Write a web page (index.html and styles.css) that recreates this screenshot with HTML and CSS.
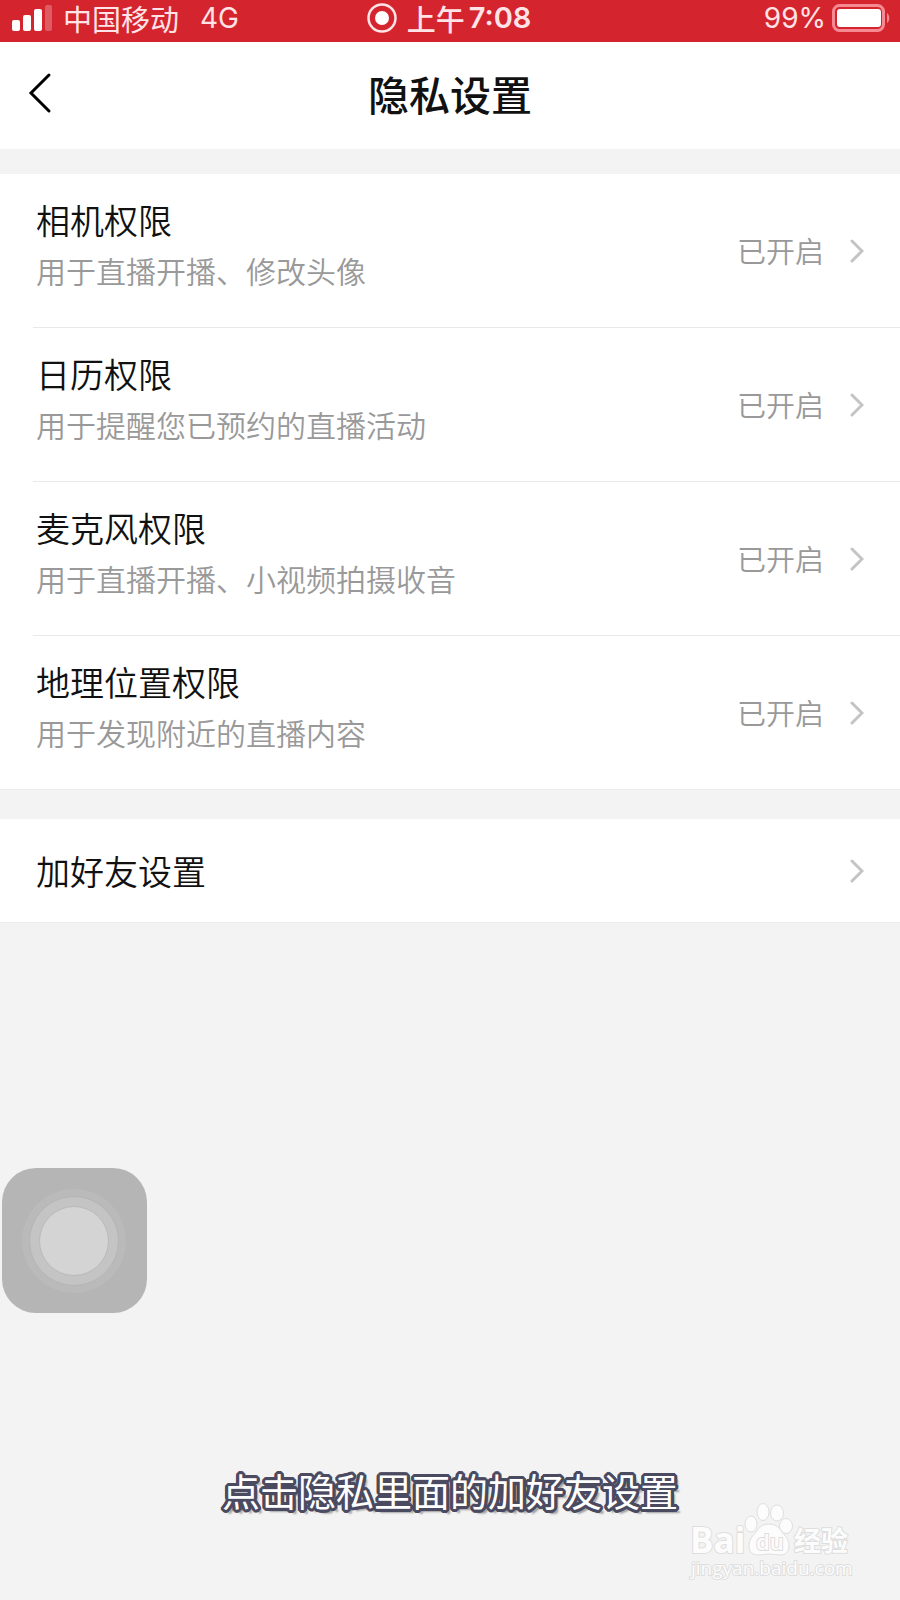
FILE: index.html
```html
<!DOCTYPE html>
<html lang="zh-CN">

<head>
  <meta charset="UTF-8">
  <meta name="viewport" content="width=device-width, initial-scale=1.0">
  <title>隐私设置</title>
  <link rel="stylesheet" href="styles.css">
</head>

<body>
  <svg class="defs" width="0" height="0" aria-hidden="true">
    <symbol id="chevron" viewBox="0 0 14 24">
      <path d="M2 2l10 10L2 22" />
    </symbol>
  </svg>

  <div class="status-bar">
    <div class="status-left">
      <svg class="signal" width="40" height="26" viewBox="0 0 40 26">
        <rect x="0" y="15" width="8" height="11" rx="2" />
        <rect x="11" y="10" width="8" height="16" rx="2" />
        <rect x="22" y="4" width="8" height="22" rx="2" />
        <rect x="33" y="0" width="7" height="26" rx="2" opacity="0.25" />
      </svg>
      <span>中国移动</span>
      <span class="network">4G</span>
    </div>
    <div class="status-time">
      <svg width="30" height="30" viewBox="0 0 30 30">
        <circle cx="15" cy="15" r="13.5" fill="none" stroke="#ffe3e6" stroke-width="2.5" />
        <circle cx="15" cy="15" r="7" fill="#fff" />
      </svg>
      <span>上午</span>
      <span class="clock">7:08</span>
    </div>
    <div class="status-right">
      <span class="percent">99%</span>
      <svg width="58" height="28" viewBox="0 0 58 28">
        <rect x="1.5" y="1.5" width="50" height="25" rx="6" fill="none" stroke="#f58a93" stroke-width="3" />
        <rect x="5" y="5" width="44" height="18" rx="3" fill="#fff" />
        <path d="M55 9c3 2 3 8 0 10z" fill="#f58a93" />
      </svg>
    </div>
  </div>

  <header class="nav-bar">
    <button class="back" type="button" aria-label="返回">
      <svg width="24" height="42" viewBox="0 0 24 42">
        <path d="M21 3L3 21l18 18" />
      </svg>
    </button>
    <h1>隐私设置</h1>
  </header>

  <main>
    <ul class="group">
      <li>
        <a class="row" href="#camera">
          <span class="text">
            <span class="name">相机权限</span>
            <span class="desc">用于直播开播、修改头像</span>
          </span>
          <span class="state">已开启</span>
          <svg class="chevron"><use href="#chevron" /></svg>
        </a>
      </li>
      <li>
        <a class="row" href="#calendar">
          <span class="text">
            <span class="name">日历权限</span>
            <span class="desc">用于提醒您已预约的直播活动</span>
          </span>
          <span class="state">已开启</span>
          <svg class="chevron"><use href="#chevron" /></svg>
        </a>
      </li>
      <li>
        <a class="row" href="#microphone">
          <span class="text">
            <span class="name">麦克风权限</span>
            <span class="desc">用于直播开播、小视频拍摄收音</span>
          </span>
          <span class="state">已开启</span>
          <svg class="chevron"><use href="#chevron" /></svg>
        </a>
      </li>
      <li>
        <a class="row" href="#location">
          <span class="text">
            <span class="name">地理位置权限</span>
            <span class="desc">用于发现附近的直播内容</span>
          </span>
          <span class="state">已开启</span>
          <svg class="chevron"><use href="#chevron" /></svg>
        </a>
      </li>
    </ul>

    <ul class="group">
      <li>
        <a class="row row-single" href="#friends">
          <span class="text name">加好友设置</span>
          <svg class="chevron"><use href="#chevron" /></svg>
        </a>
      </li>
    </ul>
  </main>

  <button class="assistive" type="button" aria-label="辅助触控">
    <svg width="106" height="106" viewBox="0 0 106 106">
      <circle cx="52" cy="53" r="52" fill="#bababa" />
      <circle cx="52" cy="53" r="44.5" fill="#c4c4c4" stroke="#b5b5b5" />
      <circle cx="52" cy="53" r="34.5" fill="#d4d4d4" stroke="#bababa" />
    </svg>
  </button>

  <p class="caption">点击隐私里面的加好友设置</p>

  <svg class="watermark" width="170" height="84" viewBox="0 0 170 84">
    <text class="wm-logo" x="4" y="53">Bai</text>
    <ellipse cx="65" cy="24" rx="6" ry="8" />
    <ellipse cx="77" cy="12" rx="6" ry="8.5" />
    <ellipse cx="91" cy="13" rx="6.5" ry="8" />
    <ellipse cx="100" cy="26" rx="6.5" ry="7.5" />
    <path d="M83 24c-6 0-10 3-13 8-3 4-7 7-7 14 0 6 4 9 9 9 4 0 7-1 11-1s7 1 11 1c5 0 9-3 9-9 0-7-4-10-7-14-3-5-7-8-13-8z" />
    <text class="wm-du" x="70" y="50">du</text>
    <text class="wm-cjk" x="108" y="51">经验</text>
    <text class="wm-url" x="5" y="75">jingyan.baidu.com</text>
  </svg>
</body>

</html>
```
FILE: styles.css
```css
* {
  box-sizing: border-box;
}

body {
  position: relative;
  min-height: 100vh;
  margin: 0;
  background-color: #f3f3f3;
  color: #111;
  font-family: "Noto Sans CJK SC", sans-serif;
}

h1,
p,
ul {
  margin: 0;
  padding: 0;
}

ul {
  list-style: none;
}

svg {
  display: block;
  flex: none;
}

button {
  padding: 0;
  border: 0;
  background: none;
  cursor: pointer;
}

.defs {
  position: absolute;
}

/* status bar */
.status-bar {
  display: grid;
  grid-template-columns: 1fr auto 1fr;
  align-items: center;
  height: 42px;
  padding: 0 10px 6px 12px;
  background-color: #d4252f;
  color: #ffe3e6;
  font-size: 29px;
  line-height: 36px;
}

.status-left,
.status-time,
.status-right {
  display: flex;
  align-items: center;
}

.status-left {
  gap: 11px;
}

.status-time {
  gap: 10px;
  padding-right: 4px;
  font-weight: 500;
}

.status-right {
  justify-content: flex-end;
  gap: 6px;
}

.signal {
  fill: #fff;
}

.network,
.percent,
.clock {
  font-family: Inter, sans-serif;
  font-size: 28px;
}

.network {
  margin-left: 10px;
}

.clock {
  margin-left: -6px;
  font-size: 29px;
  font-weight: 600;
}

/* title bar */
.nav-bar {
  display: grid;
  grid-template-columns: 1fr auto 1fr;
  align-items: center;
  height: 107px;
  padding: 0 28px 5px;
  background-color: #fff;
}

.back {
  justify-self: start;
}

.back path {
  fill: none;
  stroke: #000;
  stroke-width: 3;
  stroke-linecap: round;
}

.nav-bar h1 {
  font-size: 41px;
  font-weight: 500;
  line-height: 60px;
}

/* setting groups */
main {
  display: flex;
  flex-direction: column;
  gap: 29px;
  padding-top: 25px;
}

.group {
  padding-left: 33px;
  border-bottom: 1px solid #ededed;
  background-color: #fff;
}

.group li + li {
  border-top: 1px solid #e9e9e9;
}

.row {
  display: flex;
  align-items: center;
  height: 153px;
  padding: 0 36px 0 3px;
  color: inherit;
  text-decoration: none;
}

.group .row-single {
  height: 103px;
}

.text {
  flex: 1;
}

.name,
.desc {
  display: block;
}

.name {
  font-size: 34px;
  font-weight: 350;
  line-height: 50px;
}

.desc {
  padding-bottom: 12px;
  color: #999;
  font-size: 30px;
  font-weight: 350;
  line-height: 50px;
}

.state {
  margin-right: 26px;
  padding-bottom: 2px;
  color: #999;
  font-size: 29px;
  font-weight: 350;
}

.chevron {
  width: 14px;
  height: 24px;
  fill: none;
  stroke: #c4c4c4;
  stroke-width: 3;
  stroke-linecap: round;
}

/* floating touch button */
.assistive {
  position: absolute;
  left: 2px;
  bottom: 287px;
  display: flex;
  align-items: center;
  justify-content: center;
  width: 145px;
  height: 145px;
  border-radius: 34px;
  background-color: #b5b5b5;
}

/* subtitle */
.caption {
  position: absolute;
  left: 0;
  right: 0;
  bottom: 82px;
  color: #fff;
  font-size: 38px;
  line-height: 56px;
  text-align: center;
  text-shadow:
    3px 0 #4a4a60, -3px 0 #4a4a60, 0 3px #4a4a60, 0 -3px #4a4a60,
    2px 2px #4a4a60, -2px 2px #4a4a60, 2px -2px #4a4a60, -2px -2px #4a4a60,
    3px 1px #4a4a60, -3px 1px #4a4a60, 3px -1px #4a4a60, -3px -1px #4a4a60,
    1px 3px #4a4a60, -1px 3px #4a4a60, 1px -3px #4a4a60, -1px -3px #4a4a60,
    4px 4px 2px #999;
}

.watermark {
  position: absolute;
  right: 44px;
  bottom: 16px;
  fill: #fcfcfc;
  stroke: #dedede;
  stroke-width: 1;
}

.watermark text {
  font-family: "Open Sans", sans-serif;
  paint-order: stroke fill;
  stroke-width: 2;
}

.watermark .wm-logo {
  font-size: 35px;
  font-weight: 700;
}

.watermark .wm-du {
  font-size: 22px;
  font-weight: 600;
}

.watermark .wm-cjk {
  font-family: "Noto Sans CJK SC", sans-serif;
  font-size: 27px;
  font-weight: 700;
}

.watermark .wm-url {
  font-size: 19px;
}
```
